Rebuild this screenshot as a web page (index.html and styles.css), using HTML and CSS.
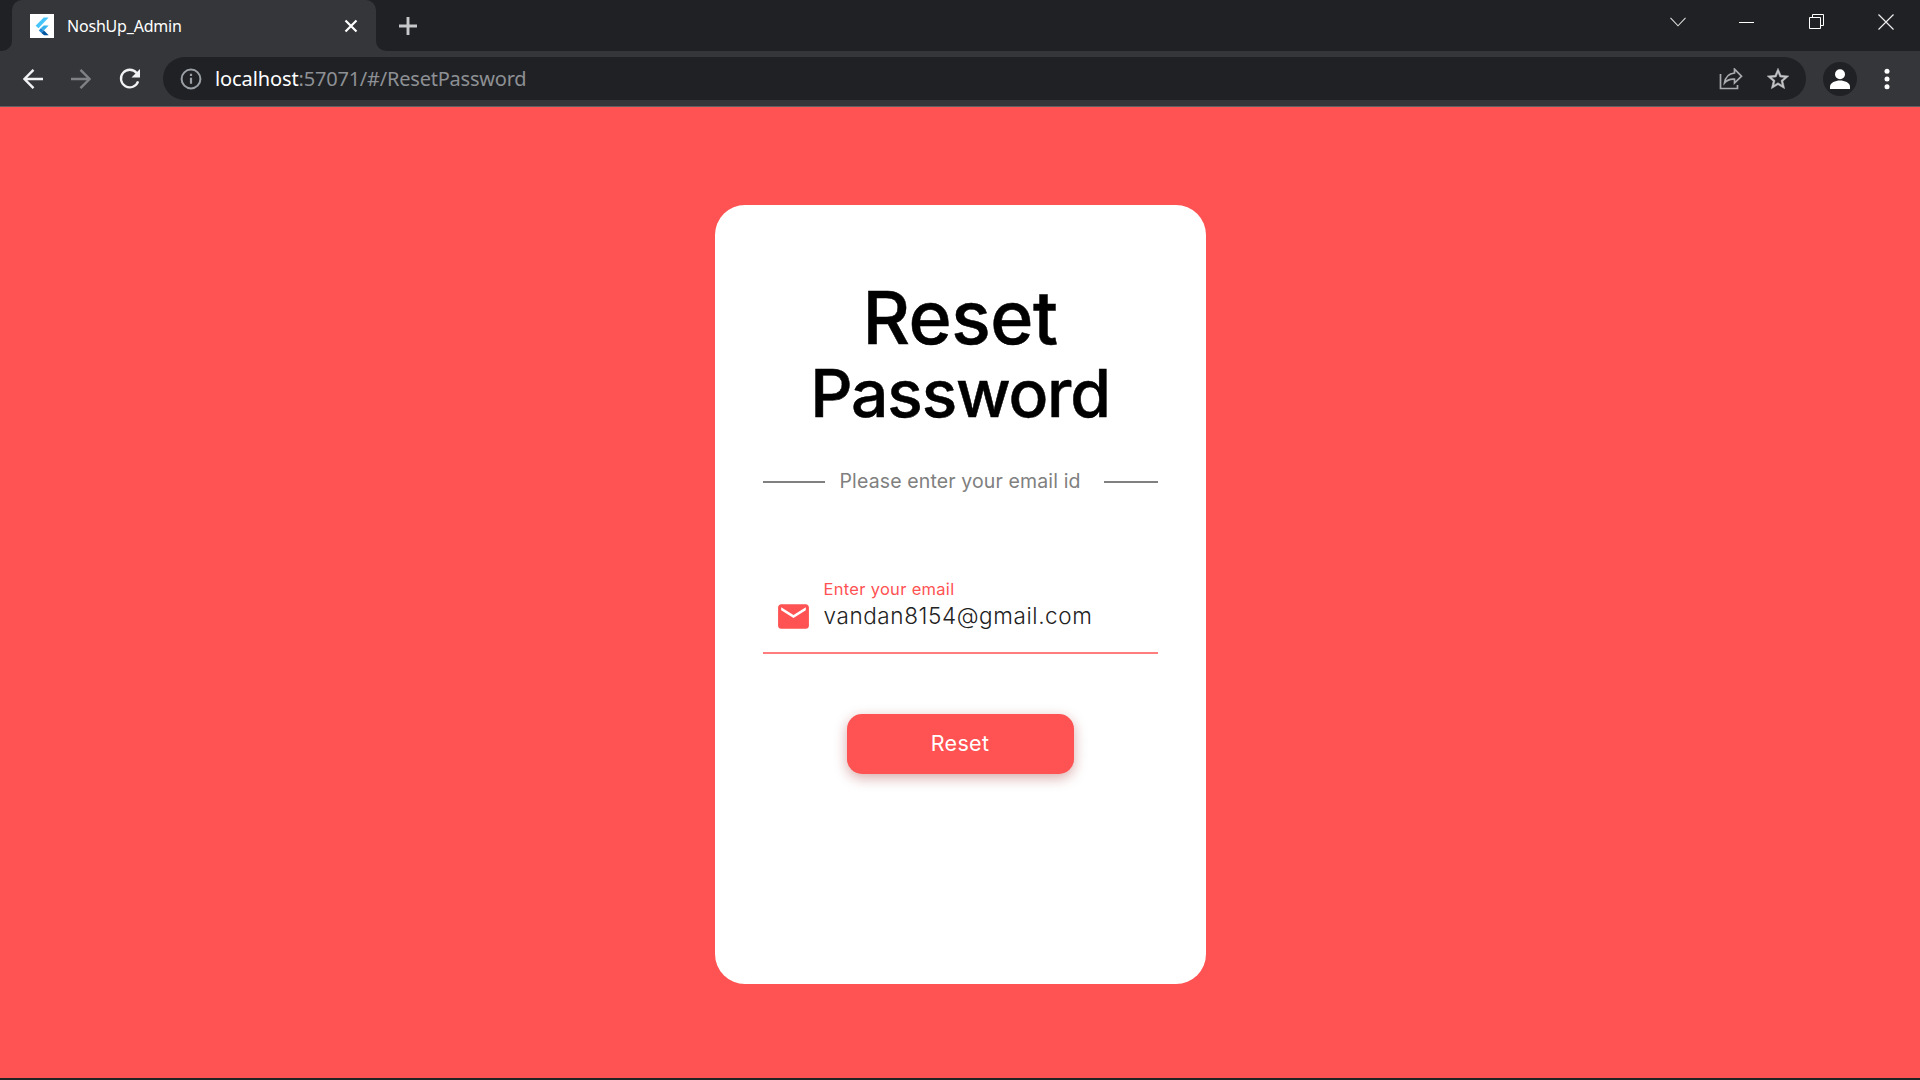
FILE: index.html
```html
<!DOCTYPE html>
<html lang="en">
<head>
<meta charset="utf-8">
<title>NoshUp_Admin</title>
<link rel="stylesheet" href="styles.css">
</head>
<body>
<div class="browser">
  <header class="tabstrip">
    <div class="prev-tab"></div>
    <div class="tab">
      <svg class="favicon" width="24" height="24" viewBox="0 0 24 24"><path fill="#fff" d="M0 0h24v24H0z"/><path fill="#47c5fb" d="M13.700 3.500h5L8.500 14.300 5.600 11.700z"/><path fill="#35b1ec" d="M13.700 11.500h5L14 16.200l-3-2.200z"/><path fill="#1f87d6" d="M11 14l3 2.500-2.600 2.600-2.600-2.600z"/><path fill="#00569e" d="M11.400 19l2.600-2.600 4.700 4.800h-4.600z"/></svg>
      <span class="tab-title">NoshUp_Admin</span>
      <svg class="tab-close" width="14" height="14" viewBox="0 0 14 14"><path d="M1.500 1.500l11 11M12.500 1.500l-11 11" stroke="#fff" stroke-width="2.200"/></svg>
    </div>
    <svg class="new-tab" width="18" height="18" viewBox="0 0 18 18"><path d="M9 0v18M0 9h18" stroke="#c6c8ca" stroke-width="2.900"/></svg>
    <div class="window-buttons">
      <svg class="chevron" width="16" height="10" viewBox="0 0 16 10"><path d="M.5 .8L8 8.800 15.500 .8" fill="none" stroke="#ddd" stroke-width="1.100"/></svg>
      <svg class="minimize" width="15" height="16" viewBox="0 0 15 16"><path d="M0 8.500h15" stroke="#fff"/></svg>
      <svg width="15" height="15" viewBox="0 0 15 15"><path d="M.5 3.500h11v11H.5zM3.500 3.500v-3h11v11h-3" fill="none" stroke="#fff"/></svg>
      <svg width="16" height="16" viewBox="0 0 16 16"><path d="M.5 .5l15 15M15.500 .5l-15 15" stroke="#eee" stroke-width="1.200"/></svg>
    </div>
  </header>
  <nav class="toolbar">
    <div class="nav-icons">
      <svg width="20" height="20" viewBox="0 0 20 20"><path d="M20 10H2M10.500 .8L1.400 10l9.100 9.200" fill="none" stroke="#f1f3f4" stroke-width="2.400"/></svg>
      <svg width="20" height="20" viewBox="0 0 20 20"><path d="M0 10h18M9.500 .8l9.100 9.200-9.100 9.200" fill="none" stroke="#808184" stroke-width="2.400"/></svg>
      <svg width="22" height="22" viewBox="0 0 22 22"><path d="M17.600 5A8.800 8.800 0 1 0 19.100 13.400" fill="none" stroke="#f1f3f4" stroke-width="2.300"/><path d="M21 1v8.500h-8.500z" fill="#f1f3f4"/></svg>
    </div>
    <div class="omnibox">
      <svg class="info" width="22" height="22" viewBox="0 0 22 22"><circle cx="11" cy="11" r="9.400" fill="none" stroke="#9aa0a6" stroke-width="2"/><path d="M11 9.800v6M11 5.800v2.200" stroke="#9aa0a6" stroke-width="2.200"/></svg>
      <span class="url"><span class="host">localhost</span><span class="path">:57071/#/ResetPassword</span></span>
      <svg class="share" width="24" height="22" viewBox="0 0 24 22"><path d="M1.500 6v14.500h17V17" fill="none" stroke="#a9abae" stroke-width="1.700"/><path d="M15.500 1.200l7 7-7 6.800v-3.800c-4.500-.4-7.500.9-10 3.800.7-5.500 4-9.300 10-10z" fill="none" stroke="#a9abae" stroke-width="1.700"/></svg>
      <svg class="star" width="26" height="26" viewBox="0 0 24 24"><path fill="#c3c5c7" stroke="#c3c5c7" stroke-width=".4" d="M22 9.240l-7.190-.62L12 2 9.190 8.630 2 9.240l5.460 4.730L5.820 21 12 17.270 18.180 21l-1.630-7.030L22 9.240zM12 15.400l-3.760 2.270 1-4.280-3.320-2.880 4.380-.38L12 6.100l1.710 4.040 4.380.38-3.320 2.880 1 4.280L12 15.400z"/></svg>
    </div>
    <svg class="avatar" width="34" height="34" viewBox="0 0 34 34"><circle cx="17" cy="17" r="17" fill="#202124"/><circle cx="17" cy="12.300" r="5" fill="#fff"/><path d="M7 27v-2.500c0-3.800 5.500-6 10-6s10 2.200 10 6V27z" fill="#fff"/></svg>
    <svg class="menu" width="6" height="22" viewBox="0 0 6 22"><g fill="#fff"><circle cx="3" cy="3.200" r="2.500"/><circle cx="3" cy="11" r="2.500"/><circle cx="3" cy="18.800" r="2.500"/></g></svg>
  </nav>
  <main class="page">
    <section class="card">
      <h1 class="title"><span class="title-top">Reset</span><span class="title-bottom">Password</span></h1>
      <div class="subtitle"><span class="subtitle-text">Please enter your email id</span></div>
      <div class="field">
        <svg class="mail" width="37" height="37" viewBox="0 0 24 24"><path fill="#ff5252" d="M20 4H4c-1.100 0-1.990.9-1.990 2L2 18c0 1.100.9 2 2 2h16c1.100 0 2-.9 2-2V6c0-1.100-.9-2-2-2zm0 4l-8 5-8-5V6l8 5 8-5v2z"/></svg>
        <div class="field-text">
          <label class="label">Enter your email</label>
          <div class="value">vandan8154@gmail.com</div>
        </div>
      </div>
      <button class="reset">Reset</button>
    </section>
  </main>
</div>
</body>
</html>
```
FILE: styles.css
```css
* { box-sizing: border-box; }
body { margin: 0; background: #202124; font-family: Inter, "Liberation Sans", sans-serif; }
svg { display: block; flex: none; }
.browser { width: 1920px; height: 1080px; display: flex; flex-direction: column; overflow: hidden; border-bottom: 2px solid #232323; }

.tabstrip { height: 51px; display: flex; background: #35363a; font-family: "Noto Sans", sans-serif; }
.prev-tab { width: 12px; background: #202124; border-bottom-right-radius: 10px; }
.tab { width: 364px; display: flex; align-items: center; padding: 0 18px; background: #35363a; border-radius: 10px 10px 0 0; box-shadow: 0 -12px 0 #202124; }
.tab-title { flex: 1; margin-left: 13px; font-size: 16px; line-height: 24px; letter-spacing: -.2px; color: #fff; }
.new-tab { width: 65px; height: 51px; padding: 17px 24px 16px 23px; background: #202124; border-bottom-left-radius: 10px; }
.window-buttons { flex: 1; display: flex; justify-content: flex-end; align-items: center; gap: 54px; padding: 0 26px 8px 0; background: #202124; }
.chevron { margin-right: -1px; }
.minimize { margin-right: 1px; }

.toolbar { height: 56px; display: flex; align-items: center; padding: 0 30px 0 23px; background: #35363a; border-bottom: 1px solid #5f6063; font-family: "Noto Sans", sans-serif; }
.nav-icons { width: 140px; display: flex; align-items: center; gap: 28px; }
.omnibox { width: 1643px; height: 43px; display: flex; align-items: center; padding: 0 15px 0 17px; background: #202124; border-radius: 22px; }
.url { flex: 1; margin-left: 13px; padding-top: 1px; font-size: 20px; line-height: 28px; white-space: nowrap; }
.host { color: #fff; letter-spacing: -.1px; }
.path { color: #8d9094; letter-spacing: -.22px; }
.star { margin-left: 22px; }
.avatar { margin-left: 17px; }
.menu { margin-left: auto; }

.page { flex: 1; display: flex; justify-content: center; align-items: flex-start; padding-top: 98px; background: #ff5252; }
.card { width: 491px; height: 779px; padding: 73.5px 48px 0; display: flex; flex-direction: column; background: #fff; border-radius: 30px; }
.title { margin: 0; display: flex; flex-direction: column; align-items: center; font-weight: 500; color: #000; -webkit-text-stroke: .5px #000; }
.title-top { font-size: 73.5px; line-height: 78px; letter-spacing: -.5px; }
.title-bottom { font-size: 66px; line-height: 73px; letter-spacing: -1.2px; }
.subtitle { margin-top: 39.5px; display: flex; align-items: center; color: #808080; }
.subtitle::before, .subtitle::after { content: ""; height: 2px; margin-top: 2px; background: #808080; }
.subtitle::before { width: 62px; }
.subtitle::after { flex: 1; }
.subtitle-text { width: 279px; padding-left: 15px; font-size: 19.5px; line-height: 24px; letter-spacing: .13px; white-space: nowrap; }
.field { height: 75px; margin-top: 85.5px; display: flex; gap: 12px; padding-left: 12px; border-bottom: 2px solid #ff7d7d; white-space: nowrap; }
.mail { margin-top: 19px; }
.label { display: block; font-size: 16.5px; line-height: 20px; letter-spacing: .3px; color: #ff5252; }
.value { margin-top: 5px; font-size: 22.5px; line-height: 24px; font-weight: 300; letter-spacing: .6px; color: #222; }
.reset { width: 227px; height: 60px; margin: 60px auto 0; padding: 0 0 2px; border: 0; border-radius: 15px; background: #ff5252; color: #fff; font: 400 21.5px/58px Inter, sans-serif; letter-spacing: .3px; box-shadow: 0 4px 13px rgba(150, 20, 20, .36); }
```
